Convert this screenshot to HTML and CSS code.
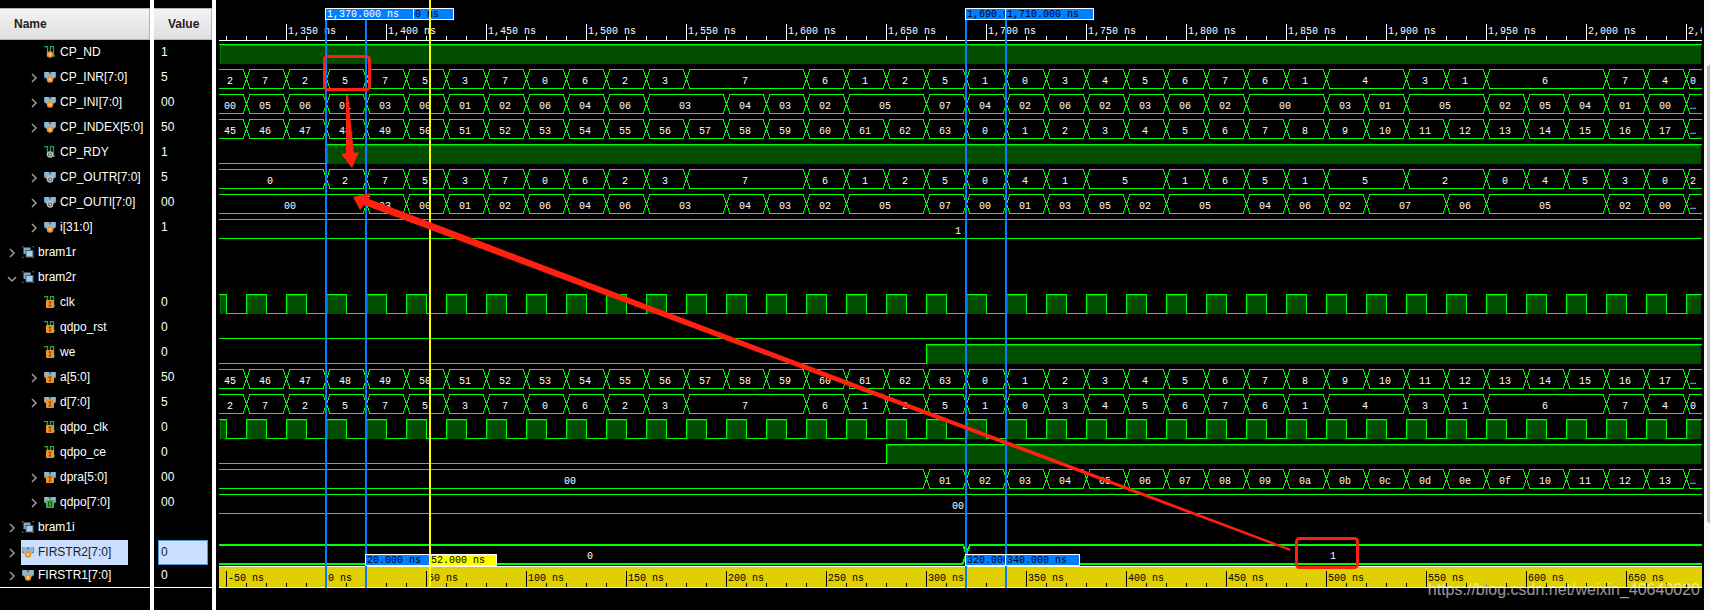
FILE: index.html
```html
<!DOCTYPE html>
<html lang="en">
<head>
<meta charset="utf-8">
<meta name="viewport" content="width=device-width, initial-scale=1.0">
<title>Waveform</title>
<link rel="stylesheet" href="styles.css">
</head>
<body>
    <!-- Icon shapes -->
    <svg class="defs" aria-hidden="true">
        <symbol id="sig" viewBox="0 0 12 12">
            <path d="M0 .5H3.5V9.5H6.5V.5H9.5V10H11" fill="none" stroke="#2f9e4f" stroke-width="1.300"/>
        </symbol>
        <symbol id="bus" viewBox="0 0 12 12">
            <path d="M0 1H5L6 3L7 1H12V6L9 8H3L0 6Z" fill="#8fb9d3"/>
            <path d="M0 1V6L2 7M12 1V6L10 7M5 1L6 3.5L7 1" fill="none" stroke="#55788f"/>
        </symbol>
        <symbol id="group" viewBox="0 0 12 12">
            <path d="M0 2V0H2M10 0H12V2M0 10V12H2M10 12H12V10" fill="none" stroke="#777"/>
            <rect x="1.500" y="1.500" width="7" height="6.500" fill="#7fabcb"/>
            <rect x="4" y="4.500" width="7" height="6.500" fill="#a9cfe6" stroke="#40617c"/>
        </symbol>
        <symbol id="reg" viewBox="0 0 12 12">
            <circle cx="6" cy="8.500" r="3.200" fill="#f0952b"/><circle cx="6" cy="8.500" r="1.200" fill="#ffd9a0"/>
        </symbol>
        <symbol id="wire" viewBox="0 0 12 12">
            <circle cx="6" cy="8.500" r="2.600" fill="#555" stroke="#c4c4c4" stroke-width="1.300"/><circle cx="6" cy="8.500" r="1" fill="#ddd"/>
        </symbol>
        <symbol id="in" viewBox="0 0 12 12">
            <rect x="2" y="4" width="8" height="8" rx="1" fill="#f0952b"/><path d="M4.500 6H7.500M6 6V10M4.500 10H7.500" stroke="#7a4300" fill="none"/>
        </symbol>
        <symbol id="out" viewBox="0 0 12 12">
            <rect x="2" y="4" width="8" height="8" rx="1" fill="#4caf50"/><rect x="4.500" y="6" width="3" height="4" fill="none" stroke="#12501a"/>
        </symbol>
    </svg>

    <div class="viewer">
        <div class="panel names">
            <div class="head">Name</div>
            <ul id="names"></ul>
        </div>
        <div class="panel values">
            <div class="head">Value</div>
            <ul id="values"></ul>
        </div>
        <div class="panel waves">
            <div class="plot" id="plot">
                <svg class="ruler" id="ruler"></svg>
                <div id="rows"></div>
                <svg class="ruler relative-ruler" id="relativeRuler"></svg>
                <div id="cursors"></div>
                <!-- Red notes over the waves -->
                <svg class="notes">
                    <rect x="105.500" y="56.500" width="45" height="33" rx="3"/>
                    <rect x="1077.500" y="538.500" width="61" height="29" rx="3"/>
                    <path d="M127 95H129L135 153L140 152L133 168L122 154L127 153Z"/>
                    <path d="M134 197L151 193L150 199L1072 549L1071 551L145 205L141 210Z"/>
                </svg>
            </div>
            <div class="watermark">https://blog.csdn.net/weixin_40640020</div>
        </div>
        <div class="scroll"><div class="thumb"></div></div>
    </div>

    <script>
        const PX = 2;        // pixels per ns
        const START = 1370;  // time of the first marker
        const ORIGIN = 107;  // x of the first marker
        const FIRST = 27;    // x of the first edge
        const CELL = 40;

        const inr = "2|7 2 5 7 5 3 7 0 6 2 3 7*3 6 1 2 5 1 0 3 4 5 6 7 6 1 4*2 3 1 6*3 7 4 0";
        const index = "45|46 47 48 49 50 51 52 53 54 55 56 57 58 59 60 61 62 63 0 1 2 3 4 5 6 7 8 9 10 11 12 13 14 15 16 17 18";

        // level, icon, badge, name, value, wave
        const signals = [
            [1, "sig", "reg", "CP_ND", "1", { high: 0 }],
            [1, "bus", "reg", "CP_INR[7:0]", "5", { bus: inr }],
            [1, "bus", "reg", "CP_INI[7:0]", "00", { bus: "00|05 06 01 03 00 01 02 06 04 06 03*2 04 03 02 05*2 07 04 02 06 02 03 06 02 00*2 03 01 05*2 02 05 04 01 00 02" }],
            [1, "bus", "reg", "CP_INDEX[5:0]", "50", { bus: index }],
            [1, "sig", "wire", "CP_RDY", "1", { high: 107 }],
            [1, "bus", "wire", "CP_OUTR[7:0]", "5", { bus: "0|+2 2 7 5 3 7 0 6 2 3 7*3 6 1 2 5 0 4 1 5*2 1 6 5 1 5*2 2*2 0 4 5 3 0 2" }],
            [1, "bus", "wire", "CP_OUTI[7:0]", "00", { bus: "00|+3 03 00 01 02 06 04 06 03*2 04 03 02 05*2 07 00 01 03 05 02 05*2 04 06 02 07*2 06 05*3 02 00 05" }],
            [1, "bus", "reg", "i[31:0]", "1", { bus: "1|+60" }],
            [0, "group", "", "bram1r", "", {}],
            [0, "group", "", "bram2r", "", {}],
            [1, "sig", "in", "clk", "0", { clock: true }],
            [1, "sig", "in", "qdpo_rst", "0", { high: 9999 }],
            [1, "sig", "in", "we", "0", { high: 707 }],
            [1, "bus", "in", "a[5:0]", "50", { bus: index }],
            [1, "bus", "in", "d[7:0]", "5", { bus: inr }],
            [1, "sig", "in", "qdpo_clk", "0", { clock: true }],
            [1, "sig", "in", "qdpo_ce", "0", { high: 667 }],
            [1, "bus", "in", "dpra[5:0]", "00", { bus: "00|+17 01 02 03 04 05 06 07 08 09 0a 0b 0c 0d 0e 0f 10 11 12 13 14" }],
            [1, "bus", "out", "qdpo[7:0]", "00", { bus: "00|+60" }],
            [0, "group", "", "bram1i", "", {}],
            [0, "bus", "reg", "FIRSTR2[7:0]", "0", { bus: "0|+18 1*60", bold: true }],
            [0, "bus", "reg", "FIRSTR1[7:0]", "0", null]
        ];

        function drawNames() {
            let names = "", values = "";
            signals.forEach(([level, icon, badge, name, value]) => {
                const open = name === "bram2r" ? "M1 4L5 8L9 4" : "M3 1L7 5L3 9";
                const hasArrow = icon !== "sig";
                const selected = name.startsWith("FIRSTR2") ? " selected" : "";
                names += `<li class="level${level}${selected}">` +
                    (hasArrow ? `<button class="arrow" aria-label="Expand ${name}"><svg viewBox="0 0 10 10"><path d="${open}"/></svg></button>` : `<span class="arrow"></span>`) +
                    `<span class="label"><svg class="icon"><use href="#${icon}"/>${badge ? `<use href="#${badge}"/>` : ""}</svg>${name}</span></li>`;
                values += `<li class="${selected}">${value}</li>`;
            });
            document.getElementById("names").innerHTML = names;
            document.getElementById("values").innerHTML = values;
        }

        // Splits "first|a b*2 +n" into value and end position
        function parseBus(text, width) {
            let [value, rest] = text.split("|");
            let end = FIRST;
            const cells = [];
            rest.split(" ").forEach(part => {
                if (part[0] === "+") {
                    end += CELL * Number(part.slice(1));
                    return;
                }
                cells.push([value, end]);
                const [next, count] = part.split("*");
                value = next;
                end += CELL * Number(count || 1);
            });
            cells.push([value, end]);
            let start = 0;
            return cells.map(([v, e]) => {
                const cell = { value: v, start: start, end: Math.min(e, width), open: e >= width };
                start = e;
                return cell;
            }).filter(c => c.start < width);
        }

        function drawBus(wave, width) {
            let d = "", labels = "";
            parseBus(wave.bus, width).forEach((c, i) => {
                const left = i ? c.start + 4 : 0;
                const right = c.open ? width : c.end - 3;
                d += `M${left} 3.5H${right}M${left} 22.5H${right}`;
                if (i) d += `M${c.start - 3} 3.5L${c.start + 4} 22.5M${c.start + 4} 3.5L${c.start - 3} 22.5`;
                const text = c.end - c.start < 20 && c.value.length > 1 ? "…" : c.value;
                // the first value starts left of the visible area
                const start = i ? c.start : -4;
                labels += `<text x="${Math.round((start + c.end) / 2) - 1}" y="18">${text}</text>`;
            });
            return `<path class="line${wave.bold ? " bold" : ""}" d="${d}"/>${labels}`;
        }

        function drawBit(high, width) {
            if (high > width) return `<path class="line" d="M0 22.5H${width}"/>`;
            const low = high ? `M0 22.5H${high}.5V3.5` : "M0 3.5";
            return `<rect class="fill" x="${high + 1}" y="4" width="${width - high - 2}" height="19"/>` +
                `<path class="shade" d="M${high + 1} 4.5H${width - 1}M${high + 1}.5 4V23"/>` +
                `<path class="line" d="${low}H${width}"/>`;
        }

        function drawClock(width) {
            let d = "M0 3.5H7.5V22.5", fills = `<rect class="fill" x="1" y="4" width="6" height="19"/>`, shade = "M1.5 23V4.5H7";
            for (let x = FIRST; x < width; x += CELL) {
                const end = Math.min(x + 20, width - 1);
                d += `H${x}.5V3.5H${end}.5`;
                if (end === x + 20) d += "V22.5";
                fills += `<rect class="fill" x="${x + 1}" y="4" width="${end - x - 1}" height="19"/>`;
                shade += `M${x + 1}.5 23V4.5H${end}`;
            }
            return `${fills}<path class="shade" d="${shade}"/><path class="line" d="${d}"/>`;
        }

        function drawRuler(id, offset, base, top, format, width) {
            let d = "", labels = "";
            for (let x = 7 - 100; x < width; x += 20) {
                const t = Math.round((x - ORIGIN) / PX) + offset;
                const major = t % 50 === 0;
                if (x >= 0) d += `M${x}.5 ${base}V${major ? top : base - 4}`;
                if (major && x >= 0) labels += `<text x="${x + 2}" y="${top + 10}">${format(t)} ns</text>`;
            }
            document.getElementById(id).innerHTML = `<path d="${d}"/>${labels}`;
        }

        function drawCursors() {
            const list = [
                // time, top width, bottom width, class
                [1390, 89, 69, ""],
                [1370, 89, 0, "active"],
                [1422, 0, 68, "main"],
                [1690, 89, 76, ""],
                [1710, 89, 75, ""]
            ];
            document.getElementById("cursors").innerHTML = list.map(([t, topWidth, bottomWidth, cls]) => {
                const x = ORIGIN + (t - START) * PX - 1;
                return `<div class="cursor ${cls}" style="left:${x}px">` +
                    (topWidth ? `<span class="tag top" style="width:${topWidth}px">${t.toLocaleString("en-US")}.000 ns</span>` : "") +
                    (bottomWidth ? `<span class="tag bottom" style="width:${bottomWidth}px">${t - START}.000 ns</span>` : "") +
                    `</div>`;
            }).join("");
        }

        function draw() {
            const width = document.getElementById("plot").clientWidth;
            drawRuler("ruler", START, 40, 24, t => t.toLocaleString("en-US"), width);
            drawRuler("relativeRuler", 0, 20, 4, t => t, width);
            document.getElementById("rows").innerHTML = signals.filter(s => s[5]).map(s => {
                const wave = s[5];
                let body = "";
                if (wave.bus) body = drawBus(wave, width);
                else if (wave.clock) body = drawClock(width);
                else if ("high" in wave) body = drawBit(wave.high, width);
                return `<svg class="wave">${body}</svg>`;
            }).join("");
        }

        drawNames();
        drawCursors();
        draw();
        window.addEventListener("resize", draw);
    </script>
</body>
</html>
```
FILE: styles.css
```css
* {
    box-sizing: border-box;
}

body {
    margin: 0;
    background-color: #ffffff;
    font-family: "Liberation Sans", Arial, sans-serif;
    font-size: 12px;
}

.defs {
    position: absolute;
    width: 0;
    height: 0;
}

.viewer {
    display: flex;
    gap: 4px;
    min-height: 100vh;
}

/* Panels */
.panel {
    background-color: #000000;
    color: #ffffff;
}

.names {
    flex: 0 0 150px;
    padding-top: 8px;
}

.values {
    flex: 0 0 58px;
    padding-top: 8px;
}

.waves {
    flex: 1;
    min-width: 0;
    padding: 0 2px 0 3px;
    position: relative;
    overflow: hidden;
}

.head {
    height: 32px;
    line-height: 30px;
    padding-left: 14px;
    font-weight: bold;
    color: #1c1c1c;
    background: linear-gradient(#f3f3f4, #dfdfe1);
    border: 1px solid #b4b4b4;
    border-left: 0;
}

ul {
    list-style: none;
    margin: 0;
    padding: 0;
    border-bottom: 1px solid #ffffff;
}

li {
    display: flex;
    align-items: center;
    height: 25px;
}

li:last-child {
    height: 22px;
}

.level0 {
    padding-left: 7px;
}

.level1 {
    padding-left: 29px;
}

.arrow {
    width: 10px;
    height: 10px;
    margin-right: 4px;
    padding: 0;
    border: 0;
    background: none;
}

.arrow svg {
    display: block;
    width: 10px;
    height: 10px;
    fill: none;
    stroke: #9a9a9a;
    stroke-width: 1.500;
}

.label {
    display: flex;
    align-items: center;
    height: 100%;
    padding-left: 1px;
    padding-bottom: 2px;
    white-space: nowrap;
}

.icon {
    width: 12px;
    height: 12px;
    margin-right: 4px;
}

.names .selected .label {
    width: 107px;
    background-color: #cadeff;
    color: #1c1c1c;
}

.values li {
    margin: 0 4px;
    padding-left: 3px;
    padding-bottom: 2px;
}

.values .selected {
    padding-left: 2px;
    border: 1px solid #4a9ad4;
    background-color: #cadeff;
    color: #1c1c1c;
}

/* Waves */
.plot {
    position: relative;
    height: 588px;
}

.plot svg {
    display: block;
    width: 100%;
}

.plot text,
.tag {
    font-family: "Liberation Mono", "Courier New", monospace;
    font-size: 10px;
}

.ruler {
    height: 41px;
    border-bottom: 1px solid #ffffff;
    fill: #ffffff;
}

.ruler path {
    stroke: #ffffff;
    shape-rendering: crispEdges;
}

.relative-ruler {
    height: 22px;
    border-top: 1px solid #ffffff;
    background-color: #e0d000;
    fill: #000000;
}

.relative-ruler path {
    stroke: #000000;
}

.wave {
    height: 25px;
}

.wave path {
    fill: none;
    shape-rendering: crispEdges;
}

.wave .line {
    stroke: #00ff00;
}

.wave .bold {
    stroke-width: 2;
}

.wave .shade {
    stroke: #008000;
}

.wave .fill {
    fill: #004d00;
}

.wave text {
    fill: #ffffff;
    text-anchor: middle;
}

.cursor {
    position: absolute;
    top: 20px;
    bottom: 0;
    width: 2px;
    background-color: #0080ff;
}

.cursor.main {
    top: 0;
    background-color: #ffff00;
}

.tag {
    position: absolute;
    left: 0;
    height: 12px;
    line-height: 12px;
    padding-left: 1px;
    border: 1px solid #ffffff;
    background-color: #0080ff;
    color: #000000;
    white-space: nowrap;
    overflow: hidden;
}

.tag.top {
    top: -12px;
}

.tag.bottom {
    bottom: 22px;
}

.active .tag {
    color: #ffffff;
}

.main .tag {
    background-color: #ffff00;
}

.notes {
    position: absolute;
    top: 0;
    left: 0;
    height: 100%;
}

.notes rect {
    fill: none;
    stroke: #ff2010;
    stroke-width: 3;
}

.notes path {
    fill: #ff2010;
}

.watermark {
    position: absolute;
    right: 4px;
    bottom: 10px;
    font-size: 16px;
    line-height: 20px;
    color: rgba(255, 255, 255, 0.6);
}

.scroll {
    flex: 0 0 6px;
    margin-left: -4px;
    padding: 65px 0 87px 3px;
    display: flex;
    background-color: #f8f8f8;
}

.thumb {
    flex: 1;
    border-radius: 3px 0 0 3px;
    background-color: #c1c1c1;
}
```
